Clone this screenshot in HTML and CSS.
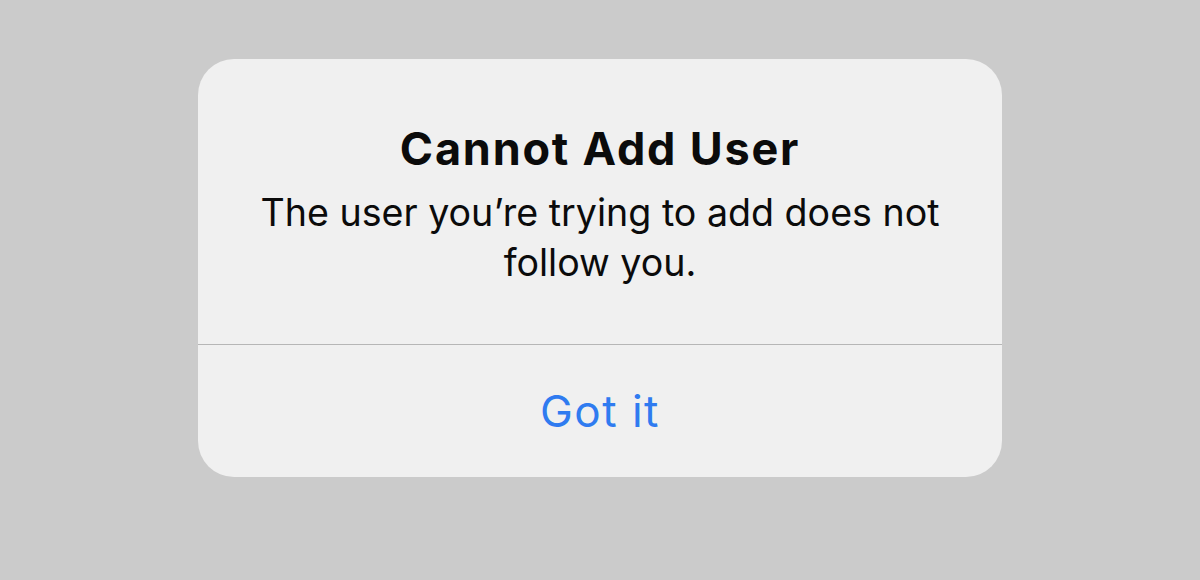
FILE: index.html
```html
<!DOCTYPE html>
<html lang="en">
<head>
<meta charset="utf-8">
<title>Cannot Add User</title>
<link rel="stylesheet" href="styles.css">
</head>
<body>
<div class="screen">
  <div class="alert" role="alertdialog" aria-labelledby="alert-title">
    <div class="alert-content">
      <h1 class="alert-title" id="alert-title">Cannot Add User</h1>
      <p class="alert-message">The user you’re trying to add does not follow you.</p>
    </div>
    <button class="alert-action" type="button">Got it</button>
  </div>
</div>
</body>
</html>
```
FILE: styles.css
```css
html, body {
  margin: 0;
  padding: 0;
}
body {
  background: #cbcbcb;
  font-family: Inter, "Noto Sans", "Liberation Sans", sans-serif;
  color: #0b0b0b;
}
.screen {
  width: 1200px;
  height: 580px;
  display: flex;
  justify-content: center;
  align-items: flex-start;
  padding-top: 59px;
  box-sizing: border-box;
}
.alert {
  width: 804px;
  height: 418px;
  background: #f0f0f0;
  border-radius: 36px;
  display: flex;
  flex-direction: column;
  overflow: hidden;
}
.alert-content {
  height: 286px;
  box-sizing: border-box;
  padding: 62px 30px 0;
  text-align: center;
  border-bottom: 1px solid #b6b6b6;
}
.alert-title {
  margin: 0;
  font-size: 45px;
  line-height: 56px;
  font-weight: 700;
  letter-spacing: 1.8px;
}
.alert-message {
  margin: 11px 0 0;
  font-size: 37.6px;
  line-height: 50px;
  font-weight: 400;
  letter-spacing: 0;
}
.alert-action {
  flex: 1;
  border: 0;
  background: transparent;
  font-family: inherit;
  font-size: 44px;
  font-weight: 400;
  letter-spacing: 1.5px;
  color: #2f7bf0;
  padding: 0;
  cursor: pointer;
}
```
